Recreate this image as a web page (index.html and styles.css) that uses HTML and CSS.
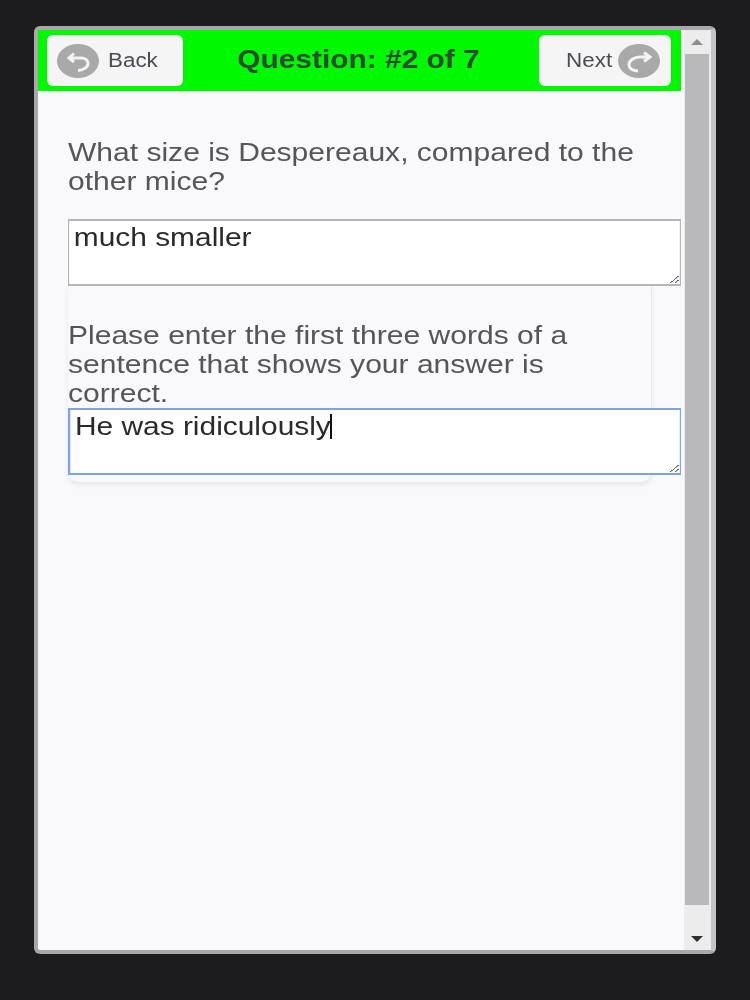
FILE: index.html
```html
<!DOCTYPE html>
<html lang="en">
<head>
    <meta charset="UTF-8">
    <meta name="viewport" content="width=device-width, initial-scale=1.0">
    <title>Question 2 of 7</title>
    <link rel="stylesheet" href="styles.css">
</head>
<body>
    <div id="frame">
        <div id="page">
            <header id="topbar">
                <button class="nav-btn back">
                    <svg class="nav-icon" viewBox="0 0 42 34">
                        <ellipse cx="21" cy="17" rx="21" ry="17" fill="#a9a9aa"/>
                        <path d="M17 9.500l-5 4.500 5 4M12 14h12c4.500 0 7 2.500 7 5.500 0 3.500-4 6.500-10 7" fill="none" stroke="#f4f4f5" stroke-width="3"/>
                    </svg>
                    <span class="label">Back</span>
                </button>
                <h1>Question: #2 of 7</h1>
                <button class="nav-btn next">
                    <span class="label">Next</span>
                    <svg class="nav-icon" viewBox="0 0 42 34">
                        <ellipse cx="21" cy="17" rx="21" ry="17" fill="#a9a9aa"/>
                        <path d="M26 8.500l6 4.500-6 4.500M32 13h-10c-6 0-11 3.500-11 7.500 0 3.500 3.500 6 9 6.500" fill="none" stroke="#f4f4f5" stroke-width="3"/>
                    </svg>
                </button>
            </header>
            <main id="content">
                <p class="question">What size is Despereaux, compared to the other mice?</p>
                <textarea class="answer">much smaller</textarea>
                <div class="card">
                    <p class="prompt">Please enter the first three words of a sentence that shows your answer is correct.</p>
                    <div class="field">
                        <textarea class="answer active">He was ridiculously</textarea>
                        <span class="caret"></span>
                    </div>
                </div>
            </main>
        </div>
        <div id="scrollbar">
            <span class="arrow up"></span>
            <div class="thumb"></div>
            <span class="arrow down"></span>
        </div>
    </div>
</body>
</html>
```

FILE: styles.css
```css
body {
    box-sizing: border-box;
    margin: 0;
    padding: 26px 34px 46px;
    height: 1000px;
    overflow: hidden;
    background-color: #1c1b1e;
    font-family: "Liberation Sans", Arial, sans-serif;
}

#frame {
    display: flex;
    box-sizing: border-box;
    width: 682px;
    height: 928px;
    border: 4px solid #a8a8aa;
    border-right: 5px solid #c4c4c6;
    border-radius: 6px;
    background-color: #f9f9fb;
    filter: blur(0.5px);
}

#page {
    width: 643px;
    flex-shrink: 0;
}

#topbar {
    display: flex;
    align-items: center;
    justify-content: space-between;
    box-sizing: border-box;
    height: 61px;
    padding: 0 10px 0 9px;
    background-color: #00f800;
}

/* the reference text is wider than it is tall, hence the scaleX */
#topbar h1 {
    margin: 0 5px 2px 0;
    font-size: 26px;
    font-weight: bold;
    color: #2f4a35;
    transform: scaleX(1.15);
}

.nav-btn {
    display: flex;
    align-items: center;
    gap: 6px;
    box-sizing: border-box;
    height: 51px;
    border: 0;
    border-radius: 6px;
    background-color: #f5f5f6;
    font-family: inherit;
    font-size: 20px;
    color: #4b4b52;
}

.nav-btn .label {
    transform: scaleX(1.12);
}

.nav-btn.back {
    gap: 9px;
    width: 136px;
    padding: 0 0 0 10px;
}

.nav-btn.back .label {
    transform-origin: left;
}

.nav-btn.next {
    justify-content: flex-end;
    width: 132px;
    padding: 0 11px 0 0;
}

.nav-btn.next .label {
    transform-origin: right;
}

.nav-icon {
    width: 42px;
    height: 34px;
    flex-shrink: 0;
}

#content {
    padding: 47px 0 0 30px;
}

.question,
.prompt {
    width: 495px;
    margin: 0;
    font-size: 26px;
    line-height: 29px;
    color: #55555a;
    transform: scaleX(1.155);
    transform-origin: left;
}

.question {
    margin-bottom: 23px;
}

.answer {
    display: block;
    box-sizing: border-box;
    width: 533px;
    height: 67px;
    margin: 0;
    padding: 2px 4px;
    border: 2px solid #b5b5b8;
    border-left-width: 1.500px;
    border-right-width: 1.500px;
    outline: 0;
    background-color: #fff;
    font-family: inherit;
    font-size: 26px;
    line-height: 29px;
    color: #2a2a2e;
    transform: scaleX(1.15);
    transform-origin: left;
}

.answer.active {
    border-color: #7ea2e2;
    border-left-width: 2px;
}

.card {
    box-sizing: border-box;
    width: 584px;
    height: 196px;
    padding-top: 35px;
    border-right: 1px solid #e8e8ea;
    border-radius: 0 0 10px 10px;
    box-shadow: 0 3px 5px rgba(0, 0, 0, 0.07);
}

.field {
    position: relative;
}

.caret {
    position: absolute;
    left: 262px;
    top: 6px;
    width: 2px;
    height: 25px;
    background-color: #111;
}

#scrollbar {
    display: flex;
    flex-direction: column;
    align-items: center;
    flex: 1;
    box-sizing: border-box;
    margin-left: 3px;
    background-color: #ececed;
}

.thumb {
    width: 24px;
    height: 851px;
    margin-right: 1px;
    background-color: #b9b9bb;
}

.arrow {
    width: 0;
    height: 0;
    margin-right: 1px;
    border-left: 6px solid transparent;
    border-right: 6px solid transparent;
}

.arrow.up {
    margin-top: 9px;
    margin-bottom: 9px;
    border-bottom: 6px solid #8f8f92;
}

.arrow.down {
    margin-top: 31px;
    border-top: 6px solid #2f2f33;
}
```
